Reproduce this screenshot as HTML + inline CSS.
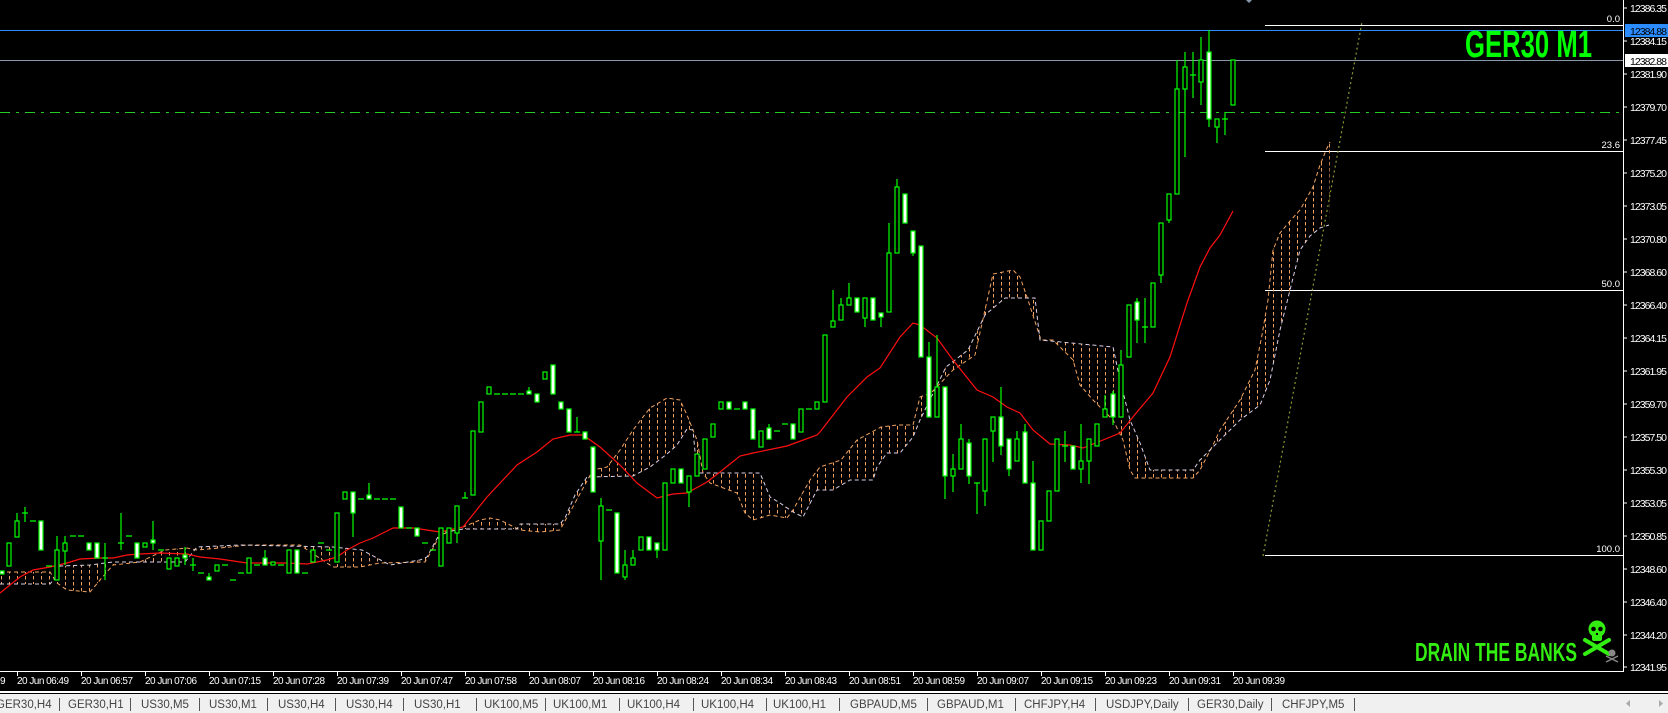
<!DOCTYPE html>
<html><head><meta charset="utf-8"><style>
html,body{margin:0;padding:0;background:#000;width:1668px;height:713px;overflow:hidden}
svg{display:block}
text{font-family:"Liberation Sans",sans-serif}
.g{fill:#000;stroke:#00ff00;stroke-width:1.2}
.w{fill:#fff;stroke:#00ff00;stroke-width:1.2}
.ax{fill:#fff;font-size:10.5px}
.tl{fill:#fff;font-size:10px}
.tab{fill:#444;font-size:11.5px}
</style></head><body>
<svg width="1668" height="713" viewBox="0 0 1668 713" xmlns="http://www.w3.org/2000/svg">
<defs>
<pattern id="h" width="8" height="6" patternUnits="userSpaceOnUse">
<line x1="1.5" y1="0" x2="1.5" y2="3.5" stroke="#f0a060" stroke-width="1"/>
</pattern>
</defs>
<rect width="1668" height="713" fill="#000"/>

<line x1="0" y1="30.5" x2="1623" y2="30.5" stroke="#2a8cff" stroke-width="1"/>
<line x1="0" y1="60.5" x2="1623" y2="60.5" stroke="#8899aa" stroke-width="1"/>
<line x1="0" y1="112.5" x2="1623" y2="112.5" stroke="#22cc22" stroke-width="1" stroke-dasharray="10,6,3,6"/>

<g stroke="#fff" stroke-width="1">
<line x1="1265" y1="25.5" x2="1623" y2="25.5"/>
<line x1="1265" y1="151.5" x2="1623" y2="151.5"/>
<line x1="1265" y1="290.5" x2="1623" y2="290.5"/>
<line x1="1265" y1="555.5" x2="1623" y2="555.5"/>
</g>
<g fill="#fff" font-size="9.5" text-anchor="end">
<text x="1620" y="22">0.0</text>
<text x="1620" y="148">23.6</text>
<text x="1620" y="287">50.0</text>
<text x="1620" y="552">100.0</text>
</g>
<line x1="1263" y1="556" x2="1362" y2="22" stroke="#8a9a30" stroke-width="1.2" stroke-dasharray="2,3"/>
<path d="M1246 0h6l-3 3z" fill="#8899aa"/>

<path fill="url(#h)" fill-rule="evenodd" d="M0 572L50 572L57 583L67 590L90 592L100 580L113 565L140 562L165 550L187 548L197 550L230 547L247 545L300 545L333 567L360 567L380 563L425 562L432 550L440 535L455 530L463 527L480 520L490 518L500 520L510 525L520 530L540 532L560 530L575 503L593 470L607 467L620 450L633 430L650 408L667 398L680 400L687 415L697 440L703 473L710 483L737 493L745 513L753 520L770 515L787 518L793 510L810 480L820 467L841 460L857 440L881 427L897 425L913 425L920 397L931 393L953 370L975 355L993 274L1013 270L1020 277L1027 297L1041 340L1053 340L1073 360L1080 385L1093 400L1113 420L1123 440L1130 470L1135 478L1193 478L1200 470L1213 445L1220 430L1240 400L1255 370L1262 335L1268 300L1273 250L1280 233L1290 221L1300 210L1313 187L1320 165L1327 148L1330 142L1329 225L1320 228L1310 236L1300 250L1290 290L1280 330L1270 380L1260 405L1240 420L1220 440L1200 460L1193 470L1150 470L1140 443L1130 420L1120 380L1113 347L1040 340L1035 298L1005 298L985 315L968 350L946 367L920 420L913 437L900 453L887 453L877 467L873 480L850 480L833 490L817 490L803 517L793 512L780 503L770 497L760 473L697 473L693 430L687 429L677 445L667 454L650 467L633 476L587 477L575 495L565 518L560 524L520 524L517 529L463 529L440 533L427 557L420 560L390 565L362 550L333 547L240 545L197 547L185 562L113 562L90 565L60 566L55 578L50 584L0 584Z"/>
<polyline fill="none" stroke="#f4a460" stroke-width="1" stroke-dasharray="4,3" points="0,572 50,572 57,583 67,590 90,592 100,580 113,565 140,562 165,550 187,548 197,550 230,547 247,545 300,545 333,567 360,567 380,563 425,562 432,550 440,535 455,530 463,527 480,520 490,518 500,520 510,525 520,530 540,532 560,530 575,503 593,470 607,467 620,450 633,430 650,408 667,398 680,400 687,415 697,440 703,473 710,483 737,493 745,513 753,520 770,515 787,518 793,510 810,480 820,467 841,460 857,440 881,427 897,425 913,425 920,397 931,393 953,370 975,355 993,274 1013,270 1020,277 1027,297 1041,340 1053,340 1073,360 1080,385 1093,400 1113,420 1123,440 1130,470 1135,478 1193,478 1200,470 1213,445 1220,430 1240,400 1255,370 1262,335 1268,300 1273,250 1280,233 1290,221 1300,210 1313,187 1320,165 1327,148 1330,142"/>
<polyline fill="none" stroke="#dcd0e8" stroke-width="1" stroke-dasharray="4,3" points="0,584 50,584 55,578 60,566 90,565 113,562 185,562 197,547 240,545 333,547 362,550 390,565 420,560 427,557 440,533 463,529 517,529 520,524 560,524 565,518 575,495 587,477 633,476 650,467 667,454 677,445 687,429 693,430 697,473 760,473 770,497 780,503 793,512 803,517 817,490 833,490 850,480 873,480 877,467 887,453 900,453 913,437 920,420 946,367 968,350 985,315 1005,298 1035,298 1040,340 1113,347 1120,380 1130,420 1140,443 1150,470 1193,470 1200,460 1220,440 1240,420 1260,405 1270,380 1280,330 1290,290 1300,250 1310,236 1320,228 1329,225"/>

<polyline fill="none" stroke="#ff1010" stroke-width="1.2" points="0,593 20,577 33,570 50,567 67,563 80,559 100,558 113,558 127,555 140,554 160,553 187,554 200,557 220,559 247,563 287,563 307,564 327,560 337,557 347,550 360,543 373,538 393,528 413,528 420,529 440,532 463,527 487,497 517,465 537,452 553,439 570,435 583,435 600,447 620,465 637,483 657,498 673,494 687,493 707,482 720,472 740,456 753,453 787,446 817,435 820,432 847,397 867,377 880,368 900,337 913,323 920,325 937,338 953,360 977,390 993,397 1007,407 1020,413 1033,430 1050,444 1070,445 1083,448 1103,440 1120,433 1137,412 1153,393 1170,357 1187,303 1200,267 1210,248 1220,235 1233,211"/>

<path fill="none" stroke="#00ff00" stroke-width="1.2" d="M17 513V521M25 507V522M57 536V550M65 536V565M105 543V580M121 513V550M153 521V550M185 547V565M193 558V571M209 573V577M265 550V558M353 513V537M369 483V495M457 533V543M465 492V498M529 387V392M577 417V432M601 498V580M625 550V580M633 550V558M657 550V558M689 492V507M769 424V428M833 290V321M841 298V305M849 283V298M865 318V327M881 317V327M889 223V253M897 179V187M913 253V256M929 342V357M937 335V387M945 476V499M953 454V492M961 424V439M969 439V484M977 483V514M985 491V506M993 431V462M1001 387V455M1009 469V476M1017 431V439M1025 424V432M1033 461V483M1065 431V462M1081 424V483M1089 461V484M1105 395V409M1113 391V425M1121 350V365M1137 298V343M1145 298V343M1161 275V283M1169 220V223M1177 60V89M1185 52V157M1193 52V98M1201 37V105M1209 30V127M1217 127V143M1225 112V135"/>
<path fill="none" stroke="#00ff00" stroke-width="1.3" d="M22 513h6M30 521h6M46 566h6M70 536h6M78 536h6M102 558h6M118 543h6M126 536h6M158 550h6M190 565h6M198 573h6M222 565h6M230 580h6M238 573h6M254 565h6M278 565h6M302 573h6M318 543h6M326 550h6M358 499h6M374 499h6M382 499h6M390 499h6M406 528h6M422 543h6M430 550h6M462 498h6M494 394h6M502 394h6M510 394h6M518 394h6M574 432h6M606 510h6M734 409h6M774 431h6M782 424h6M806 409h6M974 483h6M1062 446h6M1142 327h6M1190 75h6M1222 119h6"/>
<g class="g">
<rect x="7" y="543" width="4" height="23"/><rect x="15" y="521" width="4" height="16"/><rect x="55" y="550" width="4" height="30"/><rect x="63" y="543" width="4" height="8"/><rect x="143" y="543" width="4" height="4"/><rect x="167" y="558" width="4" height="11"/><rect x="175" y="558" width="4" height="8"/><rect x="215" y="565" width="4" height="6"/><rect x="247" y="558" width="4" height="15"/><rect x="271" y="562" width="4" height="3"/><rect x="287" y="550" width="4" height="23"/><rect x="311" y="550" width="4" height="12"/><rect x="335" y="513" width="4" height="49"/><rect x="343" y="492" width="4" height="7"/><rect x="439" y="528" width="4" height="38"/><rect x="447" y="528" width="4" height="15"/><rect x="455" y="506" width="4" height="27"/><rect x="471" y="431" width="4" height="64"/><rect x="479" y="402" width="4" height="30"/><rect x="487" y="387" width="4" height="7"/><rect x="543" y="372" width="4" height="7"/><rect x="599" y="506" width="4" height="35"/><rect x="623" y="565" width="4" height="12"/><rect x="631" y="558" width="4" height="7"/><rect x="639" y="537" width="4" height="13"/><rect x="663" y="483" width="4" height="67"/><rect x="671" y="469" width="4" height="14"/><rect x="687" y="476" width="4" height="16"/><rect x="695" y="454" width="4" height="22"/><rect x="703" y="439" width="4" height="30"/><rect x="711" y="424" width="4" height="13"/><rect x="719" y="402" width="4" height="7"/><rect x="759" y="431" width="4" height="16"/><rect x="799" y="409" width="4" height="23"/><rect x="815" y="402" width="4" height="7"/><rect x="823" y="335" width="4" height="67"/><rect x="831" y="321" width="4" height="6"/><rect x="839" y="305" width="4" height="15"/><rect x="847" y="298" width="4" height="7"/><rect x="863" y="298" width="4" height="20"/><rect x="887" y="253" width="4" height="59"/><rect x="895" y="187" width="4" height="66"/><rect x="935" y="387" width="4" height="30"/><rect x="951" y="469" width="4" height="7"/><rect x="959" y="439" width="4" height="30"/><rect x="983" y="439" width="4" height="52"/><rect x="991" y="417" width="4" height="14"/><rect x="1015" y="439" width="4" height="22"/><rect x="1039" y="521" width="4" height="29"/><rect x="1047" y="491" width="4" height="30"/><rect x="1055" y="439" width="4" height="52"/><rect x="1079" y="461" width="4" height="8"/><rect x="1087" y="439" width="4" height="22"/><rect x="1095" y="424" width="4" height="22"/><rect x="1103" y="409" width="4" height="8"/><rect x="1119" y="365" width="4" height="52"/><rect x="1127" y="305" width="4" height="52"/><rect x="1151" y="283" width="4" height="44"/><rect x="1159" y="223" width="4" height="52"/><rect x="1167" y="194" width="4" height="26"/><rect x="1175" y="89" width="4" height="105"/><rect x="1183" y="67" width="4" height="22"/><rect x="1199" y="60" width="4" height="22"/><rect x="1215" y="119" width="4" height="8"/><rect x="1231" y="60" width="4" height="45"/>
</g>
<g class="w">
<rect x="0" y="571" width="4" height="3"/><rect x="39" y="521" width="4" height="29"/><rect x="87" y="543" width="4" height="7"/><rect x="95" y="543" width="4" height="15"/><rect x="135" y="543" width="4" height="15"/><rect x="151" y="540" width="4" height="3"/><rect x="183" y="555" width="4" height="3"/><rect x="207" y="577" width="4" height="3"/><rect x="263" y="558" width="4" height="7"/><rect x="295" y="550" width="4" height="23"/><rect x="351" y="492" width="4" height="21"/><rect x="367" y="495" width="4" height="4"/><rect x="399" y="507" width="4" height="21"/><rect x="415" y="528" width="4" height="8"/><rect x="527" y="391" width="4" height="3"/><rect x="535" y="394" width="4" height="8"/><rect x="551" y="365" width="4" height="29"/><rect x="559" y="402" width="4" height="7"/><rect x="567" y="409" width="4" height="23"/><rect x="583" y="432" width="4" height="7"/><rect x="591" y="447" width="4" height="45"/><rect x="615" y="513" width="4" height="60"/><rect x="647" y="537" width="4" height="13"/><rect x="655" y="543" width="4" height="7"/><rect x="679" y="469" width="4" height="14"/><rect x="727" y="402" width="4" height="7"/><rect x="743" y="402" width="4" height="7"/><rect x="751" y="409" width="4" height="30"/><rect x="767" y="428" width="4" height="11"/><rect x="791" y="424" width="4" height="15"/><rect x="855" y="298" width="4" height="14"/><rect x="871" y="298" width="4" height="22"/><rect x="879" y="313" width="4" height="4"/><rect x="903" y="194" width="4" height="29"/><rect x="911" y="231" width="4" height="22"/><rect x="919" y="246" width="4" height="111"/><rect x="927" y="357" width="4" height="60"/><rect x="943" y="387" width="4" height="89"/><rect x="967" y="443" width="4" height="33"/><rect x="999" y="417" width="4" height="29"/><rect x="1007" y="439" width="4" height="30"/><rect x="1023" y="432" width="4" height="51"/><rect x="1031" y="483" width="4" height="67"/><rect x="1071" y="446" width="4" height="23"/><rect x="1111" y="394" width="4" height="23"/><rect x="1135" y="302" width="4" height="18"/><rect x="1207" y="52" width="4" height="67"/>
</g>

<text x="1465" y="57" fill="#00ff00" font-size="38" font-weight="bold" textLength="127" lengthAdjust="spacingAndGlyphs" style='font-family:"Liberation Sans Narrow","Liberation Sans",sans-serif'>GER30 M1</text>
<text x="1415" y="661" fill="#33ee11" font-size="26" font-weight="bold" textLength="162" lengthAdjust="spacingAndGlyphs" style='font-family:"Liberation Sans Narrow","Liberation Sans",sans-serif'>DRAIN THE BANKS</text>
<g fill="#33ee11">
<circle cx="1597" cy="629" r="8.5"/>
<rect x="1592" y="633" width="10" height="8" rx="2"/>
<path d="M1585 640L1609 654" stroke="#33ee11" stroke-width="4" stroke-linecap="round"/>
<path d="M1609 640L1585 654" stroke="#33ee11" stroke-width="4" stroke-linecap="round"/>
</g>
<g fill="#000"><circle cx="1593.5" cy="629" r="2.3"/><circle cx="1600.5" cy="629" r="2.3"/><rect x="1596" y="633" width="2" height="2"/></g>
<g fill="#888"><circle cx="1612" cy="653" r="3.5"/><path d="M1606 656L1618 662M1618 656L1606 662" stroke="#888" stroke-width="1.5"/></g>

<line x1="1623.5" y1="0" x2="1623.5" y2="672" stroke="#fff"/>
<line x1="0" y1="671.5" x2="1624" y2="671.5" stroke="#fff"/>
<g stroke="#fff">
<path d="M1623 8h4M1623 41h4M1623 74h4M1623 107h4M1623 140h4M1623 173h4M1623 206h4M1623 239h4M1623 272h4M1623 305h4M1623 338h4M1623 371h4M1623 404h4M1623 437h4M1623 470h4M1623 503h4M1623 536h4M1623 569h4M1623 602h4M1623 635h4M1623 667h4"/>
</g>
<g class="ax">
<text x="1630" y="12" textLength="37">12386.35</text><text x="1630" y="45" textLength="37">12384.15</text><text x="1630" y="78" textLength="37">12381.90</text><text x="1630" y="111" textLength="37">12379.70</text><text x="1630" y="144" textLength="37">12377.45</text><text x="1630" y="177" textLength="37">12375.20</text><text x="1630" y="210" textLength="37">12373.05</text><text x="1630" y="243" textLength="37">12370.80</text><text x="1630" y="276" textLength="37">12368.60</text><text x="1630" y="309" textLength="37">12366.40</text><text x="1630" y="342" textLength="37">12364.15</text><text x="1630" y="375" textLength="37">12361.95</text><text x="1630" y="408" textLength="37">12359.70</text><text x="1630" y="441" textLength="37">12357.50</text><text x="1630" y="474" textLength="37">12355.30</text><text x="1630" y="507" textLength="37">12353.05</text><text x="1630" y="540" textLength="37">12350.85</text><text x="1630" y="573" textLength="37">12348.60</text><text x="1630" y="606" textLength="37">12346.40</text><text x="1630" y="639" textLength="37">12344.20</text><text x="1630" y="671" textLength="37">12341.95</text>
</g>
<rect x="1625" y="24" width="43" height="13" fill="#2a8cff"/>
<text x="1630" y="35" fill="#000" font-size="10.5" textLength="37">12384.88</text>
<rect x="1625" y="54" width="43" height="13" fill="#fff"/>
<text x="1630" y="65" fill="#000" font-size="10.5" textLength="37">12382.88</text>

<path stroke="#fff" d="M17.5 671v5M81.5 671v5M145.5 671v5M209.5 671v5M273.5 671v5M337.5 671v5M401.5 671v5M465.5 671v5M529.5 671v5M593.5 671v5M657.5 671v5M721.5 671v5M785.5 671v5M849.5 671v5M913.5 671v5M977.5 671v5M1041.5 671v5M1105.5 671v5M1169.5 671v5M1233.5 671v5"/>
<g class="tl">
<text x="0" y="684">9</text>
<text x="17" y="684" textLength="52">20 Jun 06:49</text><text x="81" y="684" textLength="52">20 Jun 06:57</text><text x="145" y="684" textLength="52">20 Jun 07:06</text><text x="209" y="684" textLength="52">20 Jun 07:15</text><text x="273" y="684" textLength="52">20 Jun 07:28</text><text x="337" y="684" textLength="52">20 Jun 07:39</text><text x="401" y="684" textLength="52">20 Jun 07:47</text><text x="465" y="684" textLength="52">20 Jun 07:58</text><text x="529" y="684" textLength="52">20 Jun 08:07</text><text x="593" y="684" textLength="52">20 Jun 08:16</text><text x="657" y="684" textLength="52">20 Jun 08:24</text><text x="721" y="684" textLength="52">20 Jun 08:34</text><text x="785" y="684" textLength="52">20 Jun 08:43</text><text x="849" y="684" textLength="52">20 Jun 08:51</text><text x="913" y="684" textLength="52">20 Jun 08:59</text><text x="977" y="684" textLength="52">20 Jun 09:07</text><text x="1041" y="684" textLength="52">20 Jun 09:15</text><text x="1105" y="684" textLength="52">20 Jun 09:23</text><text x="1169" y="684" textLength="52">20 Jun 09:31</text><text x="1233" y="684" textLength="52">20 Jun 09:39</text>
</g>

<rect x="0" y="691" width="1668" height="2" fill="#fff"/>
<rect x="0" y="694" width="1668" height="19" fill="#f0f0f0"/>
<path stroke="#555" d="M59.5 698v13M130.5 698v13M199.5 698v13M267.5 698v13M335.5 698v13M403.5 698v13M476.5 698v13M545.5 698v13M619.5 698v13M693.5 698v13M766.5 698v13M839.5 698v13M927.5 698v13M1015.5 698v13M1095.5 698v13M1188.5 698v13M1271.5 698v13M1354.5 698v13"/>
<g class="tab">
<text x="-4" y="708">GER30,H4</text><text x="68" y="708">GER30,H1</text><text x="141" y="708">US30,M5</text><text x="209" y="708">US30,M1</text><text x="278" y="708">US30,H4</text><text x="346" y="708">US30,H4</text><text x="414" y="708">US30,H1</text><text x="484" y="708">UK100,M5</text><text x="553" y="708">UK100,M1</text><text x="627" y="708">UK100,H4</text><text x="701" y="708">UK100,H4</text><text x="773" y="708">UK100,H1</text><text x="850" y="708">GBPAUD,M5</text><text x="937" y="708">GBPAUD,M1</text><text x="1024" y="708">CHFJPY,H4</text><text x="1106" y="708">USDJPY,Daily</text><text x="1197" y="708">GER30,Daily</text><text x="1282" y="708">CHFJPY,M5</text>
</g>
<path fill="#aaa" d="M1630 700l-4 3.5 4 3.5zM1659 700l4 3.5-4 3.5z"/>
</svg>
</body></html>
